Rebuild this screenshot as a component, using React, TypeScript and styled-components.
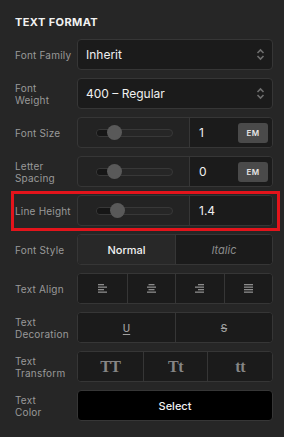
import React, { FC, ReactElement, ReactNode } from 'react';
import styled, { createGlobalStyle, css } from 'styled-components';

const GlobalStyle = createGlobalStyle`
  html, body {
    margin: 0;
    padding: 0;
    background: #262626;
  }
  body {
    font-family: Inter, "Noto Sans", sans-serif;
    -webkit-font-smoothing: antialiased;
  }
`;

const Panel = styled.div`
  width: 284px;
  height: 437px;
  box-sizing: border-box;
  padding: 15px 11px 0 15px;
  background: #262626;
`;

const Title = styled.h2`
  margin: 0 0 10px;
  font-size: 11px;
  line-height: 14px;
  font-weight: 700;
  letter-spacing: 0.4px;
  color: #f2f2f2;
`;

const Rows = styled.div`
  display: flex;
  flex-direction: column;
  gap: 8px;
`;

const Row = styled.div<{ $highlight?: boolean }>`
  position: relative;
  display: grid;
  grid-template-columns: 62px 196px;
  align-items: center;
  height: 31px;

  ${({ $highlight }) =>
    $highlight &&
    css`
      &::after {
        content: '';
        position: absolute;
        left: -4px;
        right: -7px;
        top: -4px;
        bottom: -5px;
        border: 3px solid #e3141b;
        pointer-events: none;
      }
    `}
`;

const Label = styled.div`
  font-size: 10px;
  line-height: 12px;
  color: #999;
  letter-spacing: 0.2px;
`;

const Box = styled.div<{ $bg?: string }>`
  box-sizing: border-box;
  height: 31px;
  border: 1px solid #363636;
  border-radius: 4px;
  background: ${({ $bg }) => $bg || '#1b1b1b'};
  overflow: hidden;
`;

const SelectBox = styled(Box)`
  display: flex;
  align-items: center;
  justify-content: space-between;
  padding: 0 7px 0 8px;
  font-size: 12px;
  color: #f0f0f0;
`;

const SliderBox = styled(Box)`
  display: grid;
  grid-template-columns: 111px 1fr;
  background: #232323;
`;

const SliderCell = styled.div`
  display: flex;
  align-items: center;
  padding-left: 18px;
`;

const Track = styled.div`
  position: relative;
  box-sizing: border-box;
  width: 77px;
  height: 8px;
  border: 1px solid #383838;
  border-radius: 4px;
  background: #262626;
`;

const Fill = styled.div`
  height: 100%;
  border-radius: 4px 0 0 4px;
  background: #161616;
`;

const Thumb = styled.div`
  position: absolute;
  top: 50%;
  width: 15px;
  height: 15px;
  margin: -7.5px 0 0 -7.5px;
  border-radius: 50%;
  background: #595959;
`;

const NumberCell = styled.div`
  display: flex;
  align-items: center;
  justify-content: space-between;
  padding: 0 4px 0 9px;
  border-left: 1px solid #363636;
  background: #1b1b1b;
  font-size: 12px;
  color: #f0f0f0;
`;

const UnitButton = styled.div`
  display: flex;
  align-items: center;
  justify-content: center;
  width: 30px;
  height: 20px;
  border-radius: 3px;
  background: #4a4a4a;
  font-size: 8px;
  font-weight: 600;
  color: #e6e6e6;
  letter-spacing: 0.3px;
`;

const Segments = styled(Box)<{ $count: number }>`
  display: grid;
  grid-template-columns: repeat(${({ $count }) => $count}, 1fr);
`;

const Segment = styled.div<{ $active?: boolean }>`
  display: flex;
  align-items: center;
  justify-content: center;
  background: ${({ $active }) => ($active ? '#282828' : '#1b1b1b')};
  color: ${({ $active }) => ($active ? '#f2f2f2' : '#8c8c8c')};
  font-size: 11px;
  font-weight: ${({ $active }) => ($active ? 500 : 400)};

  & + & {
    border-left: 1px solid #363636;
  }
`;

const ItalicText = styled.span`
  font-style: italic;
`;

const DecoText = styled.span<{ $line: 'underline' | 'line-through' }>`
  font-size: 10px;
  font-weight: 500;
  color: #a0a0a0;
  text-decoration: ${({ $line }) => $line};
  text-decoration-thickness: 1px;
  text-underline-offset: 2px;
`;

const CaseText = styled.span`
  font-family: "Liberation Serif", "DejaVu Serif", serif;
  font-size: 16px;
  font-weight: 700;
  color: #858585;
  letter-spacing: -0.5px;
`;

const ColorButton = styled(Box)`
  display: flex;
  align-items: center;
  justify-content: center;
  background: #000;
  font-size: 11px;
  font-weight: 500;
  color: #f2f2f2;
`;

const Chevrons: FC = (): ReactElement => (
  <svg width="9" height="13" viewBox="0 0 9 13" fill="none">
    <path d="M1.5 5 L4.5 2 L7.5 5" stroke="#6e6e6e" strokeWidth="1.6" />
    <path d="M1.5 8 L4.5 11 L7.5 8" stroke="#6e6e6e" strokeWidth="1.6" />
  </svg>
);

type Align = 'left' | 'center' | 'right' | 'justify';

const AlignIcon: FC<{ align: Align }> = ({ align }): ReactElement => {
  const lengths = align === 'justify' ? [9, 9, 9, 9] : [6, 9, 6, 9];
  return (
    <svg width="9" height="9" viewBox="0 0 9 9">
      {lengths.map((len, i) => {
        let x = 0;
        if (align === 'center') x = (9 - len) / 2;
        if (align === 'right') x = 9 - len;
        return <rect key={i} x={x} y={i * 2.5} width={len} height="1.3" fill="#8c8c8c" />;
      })}
    </svg>
  );
};

interface SliderProps {
  value: string;
  pos: number;
  unit?: string;
}

const Slider: FC<SliderProps> = ({ value, pos, unit }): ReactElement => (
  <SliderBox>
    <SliderCell>
      <Track>
        <Fill style={{ width: pos }} />
        <Thumb style={{ left: pos }} />
      </Track>
    </SliderCell>
    <NumberCell>
      <span>{value}</span>
      {unit && <UnitButton>{unit}</UnitButton>}
    </NumberCell>
  </SliderBox>
);

const Field: FC<{ label: ReactNode; highlight?: boolean; children: ReactNode }> = ({
  label,
  highlight,
  children,
}): ReactElement => (
  <Row $highlight={highlight}>
    <Label>{label}</Label>
    {children}
  </Row>
);

const App: FC = (): ReactElement => (
  <>
    <GlobalStyle />
    <Panel>
      <Title>TEXT FORMAT</Title>
      <Rows>
        <Field label="Font Family">
          <SelectBox>
            <span>Inherit</span>
            <Chevrons />
          </SelectBox>
        </Field>
        <Field label={<>Font<br />Weight</>}>
          <SelectBox>
            <span>400 – Regular</span>
            <Chevrons />
          </SelectBox>
        </Field>
        <Field label="Font Size">
          <Slider value="1" pos={17} unit="EM" />
        </Field>
        <Field label={<>Letter<br />Spacing</>}>
          <Slider value="0" pos={17} unit="EM" />
        </Field>
        <Field label="Line Height" highlight>
          <Slider value="1.4" pos={20} />
        </Field>
        <Field label="Font Style">
          <Segments $count={2}>
            <Segment $active>Normal</Segment>
            <Segment>
              <ItalicText>Italic</ItalicText>
            </Segment>
          </Segments>
        </Field>
        <Field label="Text Align">
          <Segments $count={4}>
            <Segment><AlignIcon align="left" /></Segment>
            <Segment><AlignIcon align="center" /></Segment>
            <Segment><AlignIcon align="right" /></Segment>
            <Segment><AlignIcon align="justify" /></Segment>
          </Segments>
        </Field>
        <Field label={<>Text<br />Decoration</>}>
          <Segments $count={2}>
            <Segment><DecoText $line="underline">U</DecoText></Segment>
            <Segment><DecoText $line="line-through">S</DecoText></Segment>
          </Segments>
        </Field>
        <Field label={<>Text<br />Transform</>}>
          <Segments $count={3}>
            <Segment><CaseText>TT</CaseText></Segment>
            <Segment><CaseText>Tt</CaseText></Segment>
            <Segment><CaseText>tt</CaseText></Segment>
          </Segments>
        </Field>
        <Field label={<>Text<br />Color</>}>
          <ColorButton>Select</ColorButton>
        </Field>
      </Rows>
    </Panel>
  </>
);

export default App;
